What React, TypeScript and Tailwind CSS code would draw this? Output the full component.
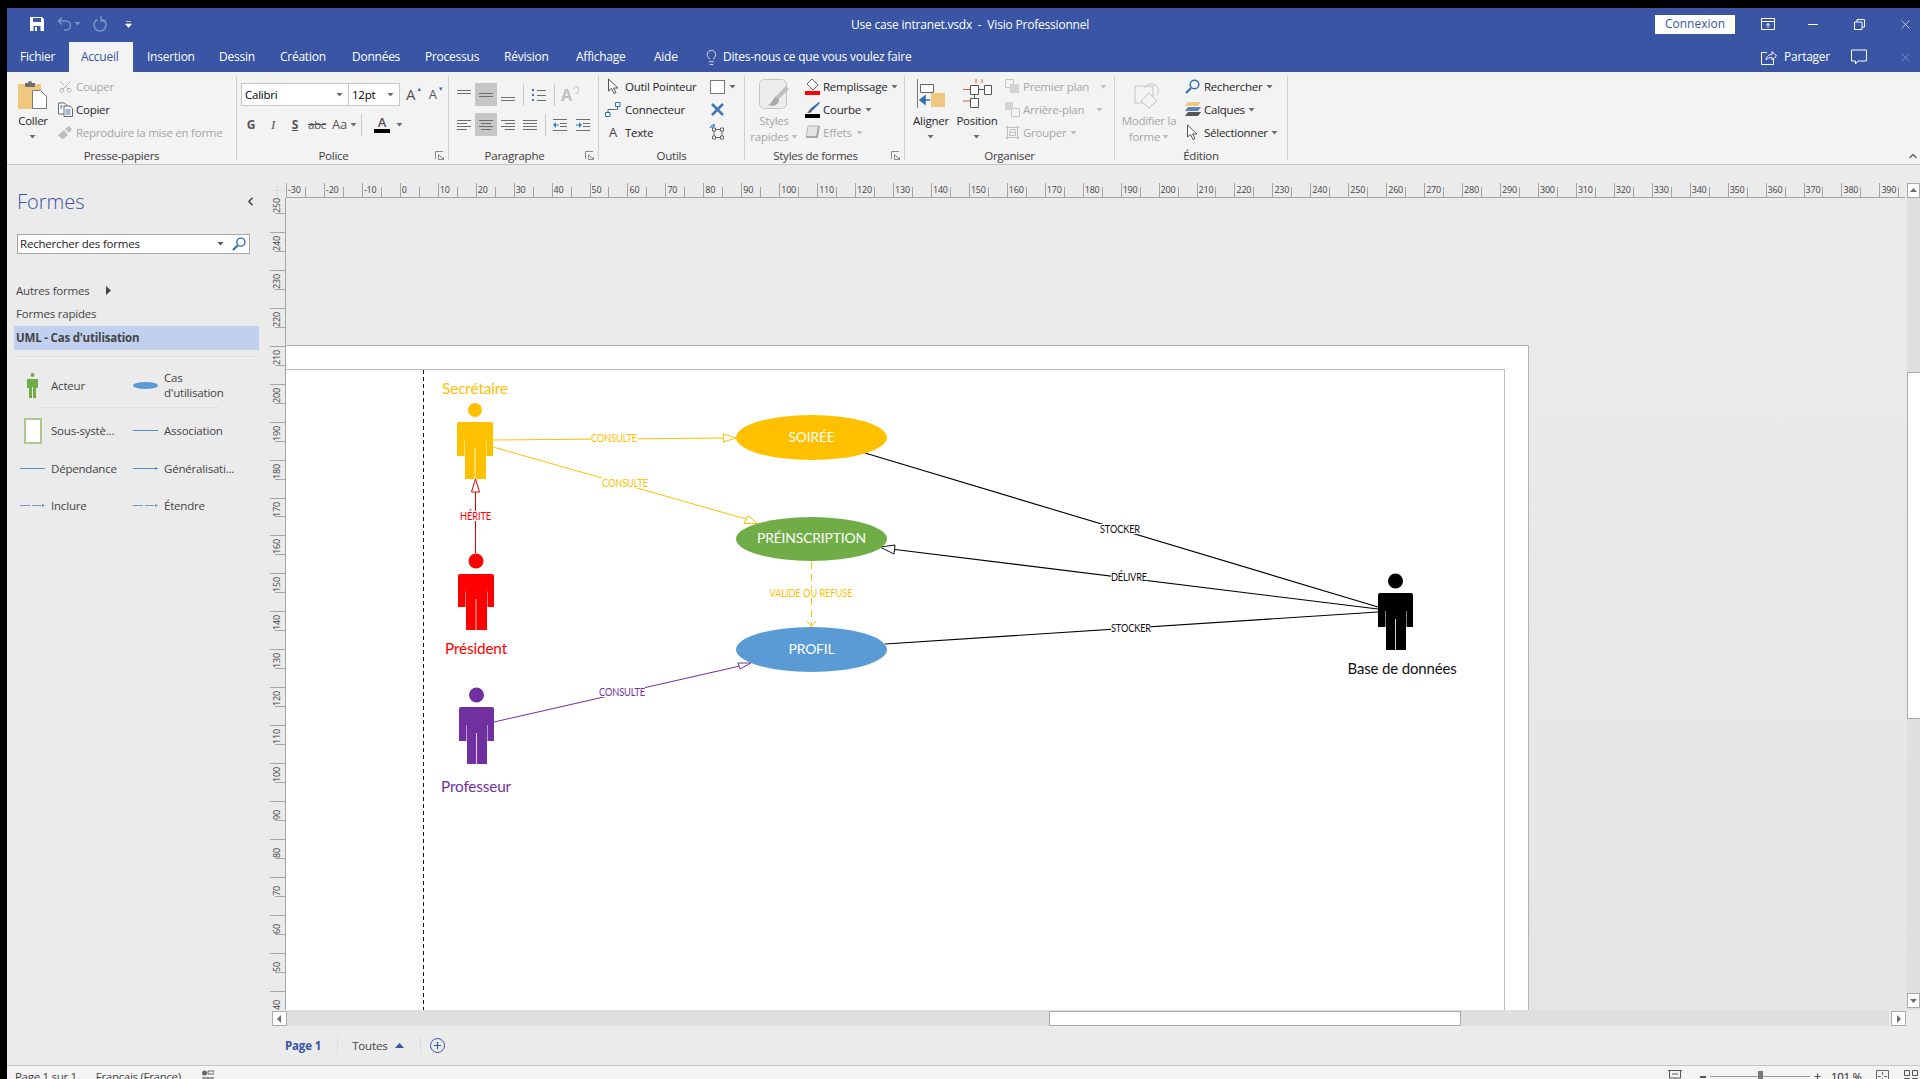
import type { ReactNode } from "react"
import { ChevronLeft, ChevronUp, Lightbulb, Plus, Scissors, X } from "lucide-react"

const GRAY = "#a6a6a6"
const TOP_TICKS = Array.from({ length: 43 }, (_, i) => -30 + i * 10)
const LEFT_TICKS = Array.from({ length: 22 }, (_, i) => 250 - i * 10)

function Caret({ color = "#6a6a6a" }: { color?: string }) {
  return (
    <svg width="7" height="4" viewBox="0 0 7 4" className="shrink-0">
      <path d="M0.5 0h6L3.5 3.5z" fill={color} />
    </svg>
  )
}

function Lines({ rows, color = "#6e6e6e" }: { rows: number[][]; color?: string }) {
  return (
    <svg width="16" height="16" viewBox="0 0 16 16">
      {rows.map(([a, b, y], i) => (
        <line key={i} x1={a} x2={b} y1={y + 0.5} y2={y + 0.5} stroke={color} />
      ))}
    </svg>
  )
}

function PointerIcon() {
  return (
    <svg width="13" height="17" viewBox="0 0 13 17">
      <path d="M1.5 1v12l3-2.5 2.500 5 2-1-2.500-4.500h4.500z" fill="#fff" stroke="#555" />
    </svg>
  )
}

function MagIcon({ size = 15 }: { size?: number }) {
  return (
    <svg width={size} height={size} viewBox="0 0 15 15">
      <circle cx="9.500" cy="5.500" r="4.300" fill="none" stroke="#2f6fb4" strokeWidth="1.500" />
      <path d="M6 9l-5 5" stroke="#2f6fb4" strokeWidth="2.200" />
    </svg>
  )
}

function Sep({ h = "h-[22px]" }: { h?: string }) {
  return <div className={`${h} w-px shrink-0 bg-[#c8c8c8]`} />
}

function Slot({ w = "w-[22px]", on, children }: { w?: string; on?: boolean; children: ReactNode }) {
  return (
    <div className={`flex h-[23px] shrink-0 items-center justify-center ${w} ${on ? "bg-[#c6c6c6]" : ""}`}>
      {children}
    </div>
  )
}

function Row({ icon, label, muted, caret, gap = "gap-[2px]", caretGap }: { icon?: ReactNode; label: string; muted?: boolean; caret?: boolean; gap?: string; caretGap?: string }) {
  return (
    <div className={`flex h-[23px] items-center whitespace-nowrap ${gap} ${muted ? "text-[#a6a6a6]" : "text-[#262626]"}`}>
      <span className="flex w-[18px] shrink-0 items-center justify-center">{icon}</span>
      <span>{label}</span>
      {caret && (
        <span className={caretGap ?? "ml-[2px]"}>
          <Caret color={muted ? "#bdbdbd" : "#6a6a6a"} />
        </span>
      )}
    </div>
  )
}

function BigButton({ w, ml, icon, lines, caret, muted }: { w: string; ml?: string; icon: ReactNode; lines: string[]; caret?: "below" | "inline"; muted?: boolean }) {
  return (
    <div className={`flex shrink-0 flex-col items-center pt-[7px] ${w} ${ml ?? ""} ${muted ? "text-[#a6a6a6]" : "text-[#262626]"}`}>
      <div className="flex h-[34px] items-start justify-center">{icon}</div>
      <div className="flex flex-col items-center leading-[16px] whitespace-nowrap">
        {lines.map((l, i) => (
          <span key={l} className="flex items-center gap-[2px]">
            {l}
            {caret === "inline" && i === lines.length - 1 && <Caret color="#bdbdbd" />}
          </span>
        ))}
        {caret === "below" && (
          <span className="flex h-[16px] items-center">
            <Caret />
          </span>
        )}
      </div>
    </div>
  )
}

function Launcher() {
  return (
    <svg width="9" height="9" viewBox="0 0 9 9" className="mx-auto">
      <path d="M.5 8V.5H8M8.500 8.500H3.500V3.500M4 4l4 4M8.500 6v2.500H6" fill="none" stroke="#8a8a8a" />
    </svg>
  )
}

function Group({ w, label, launcher, children }: { w: string; label: string; launcher?: boolean; children: ReactNode }) {
  return (
    <div className={`flex h-full shrink-0 ${w}`}>
      <div className="flex min-w-0 flex-1 flex-col">
        <div className="flex min-h-0 flex-1">{children}</div>
        <div className="mb-[1px] flex h-[15px] items-center leading-[15px] text-[#404040]">
          <span className="flex-1 text-center whitespace-nowrap">{label}</span>
          {launcher && (
            <span className="w-[18px]">
              <Launcher />
            </span>
          )}
        </div>
      </div>
      <div className="mt-1 mb-[4px] w-px bg-[#d0d0d0]" />
    </div>
  )
}

function TitleBar() {
  return (
    <div className="relative flex h-[34px] shrink-0 items-center pb-[2px] text-[12px] text-white">
      <div className="ml-[22px] flex w-[130px] items-center">
        <svg width="16" height="16" viewBox="0 0 16 16">
          <path d="M1 1h12l2 2v12H1z" fill="#fff" />
          <path d="M4 2h8v4H4z" fill="#3955a3" />
          <path d="M4.500 10h7v5h-7z" fill="#3955a3" />
          <path d="M6 11h2v4H6z" fill="#fff" />
        </svg>
        <svg width="16" height="16" viewBox="0 0 16 16" className="ml-[12px]">
          <path d="M5 1.500 1.500 5 5 8.500M1.500 5H9a4 4 0 0 1 0 9H7" fill="none" stroke="#7e93c8" strokeWidth="1.500" />
        </svg>
        <span className="ml-[1px]">
          <Caret color="#7e93c8" />
        </span>
        <svg width="16" height="16" viewBox="0 0 16 16" className="ml-[11px]">
          <path d="M10.500 3.500a6 6 0 1 1-5 0M9 0v5h5" fill="none" stroke="#7e93c8" strokeWidth="1.500" />
        </svg>
        <svg width="7" height="7" viewBox="0 0 7 7" className="ml-[17px]">
          <path d="M1 .5h5M.5 3h6L3.500 6.500z" fill="#fff" stroke="#fff" strokeWidth=".6" />
        </svg>
      </div>
      <div className="absolute top-[8px] left-[844px] tracking-[-0.2px] whitespace-pre">Use case intranet.vsdx  -  Visio Professionnel</div>
      <div className="ml-auto flex items-center">
        <div className="flex h-[19px] w-[80px] items-center justify-center bg-white text-[#3955a3]">Connexion</div>
        <svg width="14" height="12" viewBox="0 0 14 12" className="ml-[26px]">
          <path d="M.5.500h13v11H.5zM.5 3.500h13M7 10V5.500M5 7.500l2-2 2 2" fill="none" stroke="#fff" />
        </svg>
        <div className="ml-[33px] h-px w-[10px] bg-white" />
        <svg width="11" height="11" viewBox="0 0 11 11" className="ml-[36px]">
          <path d="M.5 3h7.500v7.500H.5zM3 3V.5h7.500V8H8" fill="none" stroke="#fff" />
        </svg>
        <X size={15} strokeWidth={1} className="mr-[7px] ml-[33px]" />
      </div>
    </div>
  )
}

const TABS = [
  { label: "Fichier", w: "w-[62px]", pl: "pl-[13px]" },
  { label: "Accueil", w: "w-[64px]", pl: "pl-[12px]", active: true },
  { label: "Insertion", w: "w-[73px]", pl: "pl-[14px]" },
  { label: "Dessin", w: "w-[61px]", pl: "pl-[13px]" },
  { label: "Création", w: "w-[72px]", pl: "pl-[13px]" },
  { label: "Données", w: "w-[73px]", pl: "pl-[13px]" },
  { label: "Processus", w: "w-[79px]", pl: "pl-[13px]" },
  { label: "Révision", w: "w-[71px]", pl: "pl-[13px]" },
  { label: "Affichage", w: "w-[78px]", pl: "pl-[14px]" },
  { label: "Aide", w: "w-[57px]", pl: "pl-[14px]" },
]

function TabBar() {
  return (
    <div className="flex h-[30px] shrink-0 items-stretch text-[12px] tracking-[-0.25px] text-white">
      {TABS.map((t) => (
        <div key={t.label} className={`flex items-center ${t.w} ${t.pl} ${t.active ? "bg-[#f3f3f3] text-[#3955a3]" : ""}`}>
          {t.label}
        </div>
      ))}
      <div className="ml-[6px] flex items-center gap-[3px]">
        <Lightbulb size={17} strokeWidth={1.1} />
        <span>Dites-nous ce que vous voulez faire</span>
      </div>
      <div className="ml-auto flex items-center">
        <svg width="16" height="15" viewBox="0 0 16 15">
          <path d="M6 2.500H.5v12h12V9M5 10c.5-4 3-5.500 6-5.500V1.500l4.500 4.500L11 10V7.500C8.500 7.500 6.500 8 5 10z" fill="none" stroke="#fff" />
        </svg>
        <span className="ml-[7px]">Partager</span>
        <svg width="16" height="16" viewBox="0 0 16 16" className="ml-[21px]">
          <path d="M.5 1h15v11H7l-2.500 3v-3h-4z" fill="none" stroke="#fff" />
        </svg>
        <X size={15} strokeWidth={1} className="mr-[7px] ml-[31px] opacity-50" />
      </div>
    </div>
  )
}

function Ribbon() {
  return (
    <div className="relative flex h-[93px] shrink-0 border-b border-[#c6c6c6] bg-[#f3f3f3] text-[11.5px] tracking-[-0.25px]">
      <Group w="w-[230px]" label="Presse-papiers">
        <BigButton
          w="w-[38px]"
          ml="ml-[7px]"
          lines={["Coller"]}
          caret="below"
          icon={
            <svg width="30" height="30" viewBox="0 0 30 30">
              <path d="M0 5h23v25H0z" fill="#edc87e" />
              <path d="M7 4h3a2 2 0 0 1 4 0h3v4H7z" fill="#6f6f6f" />
              <path d="M14.500 11.500h8l6 6v12h-14z" fill="#fff" stroke="#7a7a7a" />
            </svg>
          }
        />
        <div className="ml-[4px] pt-[3px]">
          <Row muted label="Couper" icon={<Scissors size={15} strokeWidth={1.2} color={GRAY} className="-scale-x-100 rotate-90" />} />
          <Row
            label="Copier"
            icon={
              <svg width="15" height="15" viewBox="0 0 15 15">
                <path d="M.5 1h6l2 2v9H.5z" fill="#fff" stroke="#666" />
                <path d="M6 4h6l2.500 2.500V14.500H6z" fill="#fff" stroke="#666" />
                <path d="M7.500 8h5M7.500 10h5M7.500 12h5M2 4h3M2 6h2" stroke="#3d6fb4" />
              </svg>
            }
          />
          <Row
            muted
            label="Reproduire la mise en forme"
            icon={
              <svg width="15" height="15" viewBox="0 0 15 15">
                <path d="M0 10l6-5 4 5-5 4-2-1zM7 4l4-3 3 3-3 4z" fill="#bdbdbd" />
              </svg>
            }
          />
        </div>
      </Group>

      <Group w="w-[212px]" label="Police" launcher>
        <div className="flex flex-col pt-[11px] pl-[4px]">
          <div className="flex items-center">
            <div className="flex h-[23px] w-[107px] items-center justify-between border border-r-0 border-[#c6c6c6] bg-white pr-[5px] pl-[3px]">
              <span>Calibri</span>
              <Caret />
            </div>
            <div className="flex h-[23px] w-[52px] items-center justify-between border border-[#c6c6c6] bg-white pr-[5px] pl-[3px]">
              <span>12pt</span>
              <Caret />
            </div>
            <div className="ml-[2px] flex w-[24px] items-center justify-center text-[15px] text-[#555]">
              A<span className="-mt-[10px] ml-[1px] text-[6px] text-[#3d6fb4]">▲</span>
            </div>
            <div className="flex w-[20px] items-center justify-center text-[13px] text-[#555]">
              A<span className="-mt-[10px] ml-[1px] text-[6px] text-[#3d6fb4]">▼</span>
            </div>
          </div>
          <div className="mt-[7px] -ml-[1px] flex items-center text-[#555]">
            <Slot><span className="text-[12px] font-bold">G</span></Slot>
            <Slot><span className="font-['Liberation_Serif'] text-[13px] italic">I</span></Slot>
            <Slot><span className="text-[12px] font-bold underline">S</span></Slot>
            <Slot><span className="line-through">abc</span></Slot>
            <div className="flex w-[33px] items-center gap-[3px] pl-[4px] text-[13px]">
              Aa <Caret />
            </div>
            <Sep />
            <div className="ml-[9px] flex w-[22px] flex-col items-center text-[13px] leading-[13px] font-semibold">
              A
              <div className="h-[4px] w-[16px] bg-black" />
            </div>
            <span className="ml-[3px]"><Caret /></span>
          </div>
        </div>
      </Group>

      <Group w="w-[150px]" label="Paragraphe" launcher>
        <div className="flex flex-col pt-[11px] pl-[4px]">
          <div className="flex items-center">
            <Slot><Lines rows={[[1, 15, 3], [1, 15, 6]]} /></Slot>
            <Slot on><Lines rows={[[1, 15, 6], [1, 15, 9]]} /></Slot>
            <Slot><Lines rows={[[1, 15, 10], [1, 15, 13]]} /></Slot>
            <span className="ml-[4px]"><Sep /></span>
            <Slot w="w-[30px]">
              <svg width="16" height="16" viewBox="0 0 16 16">
                <path d="M1 2h2v2H1zM1 7h2v2H1zM1 12h2v2H1z" fill="#3d6fb4" />
                <path d="M6 3.500h9M6 8.500h9M6 13.500h9" stroke="#6e6e6e" />
              </svg>
            </Slot>
            <Sep />
            <Slot w="w-[30px]">
              <div className="flex items-start text-[16px] leading-[20px] font-bold text-[#c0c0c0]">
                A
                <svg width="7" height="9" viewBox="0 0 7 9" className="mt-[1px]">
                  <path d="M1 3l2.500-2.500M3.500.5a3.500 3.500 0 0 1 0 7" fill="none" stroke="#bdbdbd" />
                </svg>
              </div>
            </Slot>
          </div>
          <div className="mt-[7px] flex items-center">
            <Slot><Lines rows={[[1, 15, 3], [1, 11, 6], [1, 15, 9], [1, 11, 12]]} /></Slot>
            <Slot on><Lines rows={[[1, 15, 3], [3, 13, 6], [1, 15, 9], [3, 13, 12]]} /></Slot>
            <Slot><Lines rows={[[1, 15, 3], [5, 15, 6], [1, 15, 9], [5, 15, 12]]} /></Slot>
            <Slot><Lines rows={[[1, 15, 3], [1, 15, 6], [1, 15, 9], [1, 15, 12]]} /></Slot>
            <span className="ml-[4px]"><Sep /></span>
            <Slot w="w-[28px]">
              <svg width="16" height="16" viewBox="0 0 16 16">
                <path d="M1 2.500h14M8 6.500h7M8 9.500h7M1 13.500h14" stroke="#6e6e6e" />
                <path d="M1 8l3-3v6z" fill="#2f7fc1" />
                <path d="M4 8h3" stroke="#2f7fc1" />
              </svg>
            </Slot>
            <Slot w="w-[18px]">
              <svg width="16" height="16" viewBox="0 0 16 16">
                <path d="M1 2.500h14M8 6.500h7M8 9.500h7M1 13.500h14" stroke="#6e6e6e" />
                <path d="M7 8L4 5v6z" fill="#2f7fc1" />
                <path d="M1 8h3" stroke="#2f7fc1" />
              </svg>
            </Slot>
          </div>
        </div>
      </Group>

      <Group w="w-[146px]" label="Outils">
        <div className="w-[108px] pt-[3px] pl-[5px]">
          <Row gap="gap-[3px]" label="Outil Pointeur" icon={<PointerIcon />} />
          <Row
            gap="gap-[3px]"
            label="Connecteur"
            icon={
              <svg width="16" height="15" viewBox="0 0 16 15">
                <path d="M3 10V7.500h9.500V4" fill="none" stroke="#666" />
                <path d="M.5 10.500h4.500v4H.5zM10.500.5h4.500v4h-4.500z" fill="#fff" stroke="#2f6fb4" />
              </svg>
            }
          />
          <Row gap="gap-[3px]" label="Texte" icon={<span className="text-[13px] text-[#444]">A</span>} />
        </div>
        <div className="flex flex-col pt-[3px]">
          <div className="flex h-[23px] items-center gap-[4px] pl-[3px]">
            <div className="h-[14px] w-[15px] border border-[#777] bg-white" />
            <Caret />
          </div>
          <div className="flex h-[23px] items-center pl-[3px]">
            <svg width="15" height="15" viewBox="0 0 15 15">
              <path d="M2 2l11 11M13 2 2 13" stroke="#3f78b8" strokeWidth="2.500" />
            </svg>
          </div>
          <div className="flex h-[23px] items-center pl-[2px]">
            <svg width="17" height="17" viewBox="0 0 17 17">
              <path d="M5 5.500h8v8H5z" fill="none" stroke="#666" />
              <path d="M3.500 4h3v3h-3zM11.500 4h3v3h-3zM3.500 12h3v3h-3zM11.500 12h3v3h-3z" fill="#fff" stroke="#666" />
              <path d="M1 4a4 4 0 0 1 5-3M5 0v3H2" fill="none" stroke="#2f6fb4" />
            </svg>
          </div>
        </div>
      </Group>

      <Group w="w-[160px]" label="Styles de formes" launcher>
        <BigButton
          w="w-[50px]"
          ml="ml-[4px]"
          muted
          lines={["Styles", "rapides"]}
          caret="inline"
          icon={
            <svg width="30" height="30" viewBox="0 0 30 30">
              <rect x=".5" y=".5" width="27" height="29" rx="5" fill="#ececec" stroke="#c4c4c4" />
              <path d="M30 10 19 21l-3-3L27 7z" fill="#bfbfbf" />
              <path d="M17 18c-4 1-3 6-8 8 5 2 11 0 11-5z" fill="#a9a9a9" />
            </svg>
          }
        />
        <div className="ml-[4px] pt-[3px]">
          <Row
            label="Remplissage"
            caret
            icon={
              <svg width="17" height="17" viewBox="0 0 17 17">
                <path d="M8 1l6 6-5 5-6-6z" fill="#fff" stroke="#666" />
                <path d="M1 13h15v4H1z" fill="#ff0000" />
              </svg>
            }
          />
          <Row
            label="Courbe"
            caret
            icon={
              <svg width="17" height="17" viewBox="0 0 17 17">
                <path d="M15 1l1 1-8 8-2-2z" fill="#2f6fb4" />
                <path d="M6 8l2 2c-1 2-4 2-5 2 1-1 2-2 3-4z" fill="#555" />
                <path d="M1 13h15v4H1z" fill="#000" />
              </svg>
            }
          />
          <Row
            muted
            caret
            label="Effets"
            icon={
              <svg width="15" height="15" viewBox="0 0 15 15">
                <path d="M3 1h11l-2 11H1z" fill="#e4e4e4" stroke="#b5b5b5" />
                <path d="M1 12h11l2-11" fill="none" stroke="#a8a8a8" strokeWidth="2" />
              </svg>
            }
          />
        </div>
      </Group>

      <Group w="w-[210px]" label="Organiser">
        <BigButton
          w="w-[48px]"
          ml="ml-[2px]"
          lines={["Aligner"]}
          caret="below"
          icon={
            <svg width="28" height="30" viewBox="0 0 28 30">
              <path d="M.5 0v29" stroke="#777" />
              <path d="M3.500 5.500h13v8h-13z" fill="#fff" stroke="#666" />
              <path d="M14 14h14v14H14z" fill="#edc87e" />
              <path d="M3 21l5-4v8zM7 21h6" fill="#2f6fb4" stroke="#2f6fb4" strokeWidth="1.500" />
            </svg>
          }
        />
        <BigButton
          w="w-[44px]"
          lines={["Position"]}
          caret="below"
          icon={
            <svg width="30" height="30" viewBox="0 0 30 30">
              <path d="M14 0v4M20 0v4M1 10.500h7M1 22h7" stroke="#d5603f" />
              <path d="M8.500 6.500h8v9h-8zM22.500 6.500h7v9h-7zM8.500 19.500h8v9h-8z" fill="#fff" stroke="#555" />
              <path d="M16.500 10.500h6M12.500 15.500v4" stroke="#555" />
            </svg>
          }
        />
        <div className="ml-[4px] pt-[3px]">
          <Row
            muted
            label="Premier plan"
            caret
            caretGap="ml-[9px]"
            icon={
              <svg width="15" height="15" viewBox="0 0 15 15">
                <path d="M.5.5h8v8h-8z" fill="none" stroke="#c4c4c4" />
                <path d="M5 5h9v9H5z" fill="#d4d4d4" />
              </svg>
            }
          />
          <Row
            muted
            label="Arrière-plan"
            caret
            caretGap="ml-[10px]"
            icon={
              <svg width="15" height="15" viewBox="0 0 15 15">
                <path d="M0 0h8v8H0z" fill="#d4d4d4" />
                <path d="M6.500 6.500h8v8h-8z" fill="#f3f3f3" stroke="#c4c4c4" />
              </svg>
            }
          />
          <Row
            muted
            label="Grouper"
            caret
            icon={
              <svg width="15" height="15" viewBox="0 0 15 15">
                <path d="M.5 2.500h14M.5 12.500h14M2.500.5v14M12.500.5v14M5 4.500h5v3h-5zM4.500 7.500h6v3h-6z" fill="none" stroke="#c0c0c0" />
              </svg>
            }
          />
        </div>
      </Group>

      <Group w="w-[173px]" label="Édition">
        <BigButton
          w="w-[56px]"
          ml="ml-[6px]"
          muted
          lines={["Modifier la", "forme"]}
          caret="inline"
          icon={
            <svg width="30" height="30" viewBox="0 0 30 30">
              <path d="M1 7h18v17H1z" fill="none" stroke="#c4c4c4" />
              <path d="M11 9a7 7 0 1 1 12 7" fill="none" stroke="#c4c4c4" />
              <path d="M15 14l8 8-8 7-8-7z" fill="#f3f3f3" stroke="#c4c4c4" />
            </svg>
          }
        />
        <div className="ml-[6px] pt-[3px]">
          <Row gap="gap-[3px]" label="Rechercher" caret caretGap="ml-0" icon={<MagIcon />} />
          <Row
            gap="gap-[3px]"
            label="Calques"
            caret
            caretGap="ml-0"
            icon={
              <svg width="17" height="15" viewBox="0 0 17 15">
                <path d="M4 0h13l-3 4H1z" fill="#edc87e" />
                <path d="M4 5h13l-3 4H1z" fill="#5b83b5" />
                <path d="M4 10h13l-3 4H1z" fill="#555" />
              </svg>
            }
          />
          <Row gap="gap-[3px]" label="Sélectionner" caret caretGap="ml-0" icon={<PointerIcon />} />
        </div>
      </Group>

      <ChevronUp size={12} strokeWidth={2.5} color="#555" className="absolute right-[1px] bottom-[2px]" />
    </div>
  )
}

function Stencil({ icon, label }: { icon: ReactNode; label: ReactNode }) {
  return (
    <div className="flex items-center">
      <div className="flex w-[37px] shrink-0 items-center justify-center">{icon}</div>
      <div className="leading-[15px]">{label}</div>
    </div>
  )
}

function LineIcon({ kind }: { kind?: "arrow" | "dash" }) {
  return (
    <svg width="26" height="5" viewBox="0 0 26 5">
      {kind === "dash" ? <path d="M0 2.500h10M12 2.500h9" stroke="#6d9bd0" /> : <path d="M0 2.500h25" stroke="#5b8fc9" />}
      {kind && <path d="M22 1l3 1.500L22 4z" fill="#5b8fc9" />}
    </svg>
  )
}

function Sidebar() {
  return (
    <div className="flex w-[263px] shrink-0 flex-col bg-[#ebebeb] text-[11.5px] tracking-[-0.2px] text-[#444]">
      <div className="flex h-[52px] items-end justify-between pr-[13px] pl-[10px]">
        <span className="text-[20px] leading-[30px] font-light tracking-normal text-[#3955a3]">Formes</span>
        <ChevronLeft size={13} strokeWidth={3} color="#444" className="mb-[9px]" />
      </div>
      <div className="mt-[17px] ml-[10px] flex h-[20px] w-[233px] items-center border border-[#a6a6a6] bg-white pr-[3px] pl-[2px] text-[#222]">
        <span className="flex-1">Rechercher des formes</span>
        <Caret color="#555" />
        <span className="ml-[8px]"><MagIcon size={14} /></span>
      </div>
      <div className="mt-[25px] flex h-[23px] items-center pl-[9px]">
        Autres formes
        <svg width="5" height="9" viewBox="0 0 5 9" className="ml-[16px]">
          <path d="M0 0l5 4.500L0 9z" fill="#444" />
        </svg>
      </div>
      <div className="flex h-[23px] items-center pl-[9px]">Formes rapides</div>
      <div className="mt-[1px] ml-[7px] flex h-[24px] w-[245px] items-center bg-[#c2d0f0] pl-[2px] font-bold">UML - Cas d'utilisation</div>
      <div className="mt-[6px] ml-[7px] h-px w-[245px] bg-[#dedede]" />
      <div className="ml-[7px] grid h-[50px] w-[226px] grid-cols-2 items-center pt-[6px]">
        <Stencil
          label="Acteur"
          icon={
            <svg width="11" height="25" viewBox="0 0 11 25">
              <circle cx="5.500" cy="2" r="2" fill="#70ad47" />
              <path d="M0 6h11v9H9v10H2V15H0z" fill="#70ad47" />
              <path d="M5.500 14v11" stroke="#ebebeb" />
            </svg>
          }
        />
        <Stencil
          label={
            <>
              Cas
              <br />
              d'utilisation
            </>
          }
          icon={<div className="h-[7px] w-[25px] rounded-[50%] bg-[#5b9bd5]" />}
        />
      </div>
      <div className="ml-[33px] h-px w-[179px] bg-[#dedede]" />
      <div className="mt-[4px] ml-[7px] grid w-[226px] grid-cols-2 items-center [grid-auto-rows:37.5px]">
        <Stencil label="Sous-systè..." icon={<div className="h-[26px] w-[18px] border-2 border-[#a9c98f] bg-white" />} />
        <Stencil label="Association" icon={<LineIcon />} />
        <Stencil label="Dépendance" icon={<LineIcon />} />
        <Stencil label="Généralisati..." icon={<LineIcon kind="arrow" />} />
        <Stencil label="Inclure" icon={<LineIcon kind="dash" />} />
        <Stencil label="Étendre" icon={<LineIcon kind="dash" />} />
      </div>
    </div>
  )
}

function TopRuler() {
  return (
    <div className="flex h-[15px] overflow-hidden border-b border-[#a6a6a6]">
      {TOP_TICKS.map((v) => (
        <div key={v} className="flex w-[37.95px] shrink-0 items-end">
          <div className="h-full w-1/2 border-l border-[#a6a6a6] pl-[1px] text-[9px] leading-[13px] tracking-[-0.2px] whitespace-nowrap text-[#444]">{v}</div>
          <div className="h-[10px] w-1/2 border-l border-[#a6a6a6]" />
        </div>
      ))}
    </div>
  )
}

function LeftRuler() {
  return (
    <div className="h-full w-[16px] shrink-0 overflow-hidden border-r border-[#a6a6a6] bg-[#ebebeb]">
      <div className="-mt-[4px] flex flex-col">
        {LEFT_TICKS.map((v) => (
          <div key={v} className="flex h-[37.95px] shrink-0 flex-col items-end">
            <div className="flex h-1/2 w-full border-t border-[#a6a6a6] pl-[1px] text-[9px] tracking-[-0.2px] text-[#444]">
              <span className="rotate-180 leading-[11px] [writing-mode:vertical-rl]">{v}</span>
            </div>
            <div className="h-1/2 w-[10px] border-t border-[#a6a6a6]" />
          </div>
        ))}
      </div>
    </div>
  )
}

function Actor({ x, top, headR, bodyTop, armEnd, legEnd, w, color }: { x: number; top: number; headR: number; bodyTop: number; armEnd: number; legEnd: number; w: number; color: string }) {
  const cx = x + w / 2
  const slit = bodyTop + (armEnd - bodyTop) * 0.53
  return (
    <g>
      <circle cx={cx} cy={top + headR} r={headR} fill={color} />
      <path
        d={`M${x + 2} ${bodyTop}h${w - 4}q2 0 2 2V${armEnd}h-6.5V${slit}h-.5V${legEnd}h-${w - 15}V${slit}h-.5V${armEnd}H${x}V${bodyTop + 2}q0-2 2-2z`}
        fill={color}
      />
      <line x1={cx} x2={cx} y1={armEnd - 8} y2={legEnd} stroke="#fff" strokeWidth=".8" />
    </g>
  )
}

function EdgeLabel({ x, y, w, color, children }: { x: number; y: number; w: number; color: string; children: string }) {
  return (
    <g>
      <rect x={x - w / 2} y={y - 5} width={w} height={10} fill="#fff" />
      <text x={x - w / 2} y={y + 3.5} fontSize="10.5" fill={color} textLength={w} lengthAdjust="spacingAndGlyphs" fontFamily="Lato">
        {children}
      </text>
    </g>
  )
}

function UseCase({ cy, ry, fill, w, children }: { cy: number; ry: number; fill: string; w: number; children: string }) {
  return (
    <g>
      <ellipse cx="811.5" cy={cy} rx="75.5" ry={ry} fill={fill} />
      <text x={811.5 - w / 2} y={cy + 4} fontSize="14" fill="#fff" textLength={w} lengthAdjust="spacingAndGlyphs" fontFamily="Lato">
        {children}
      </text>
    </g>
  )
}

function Title({ x, y, w, color, children }: { x: number; y: number; w: number; color: string; children: string }) {
  return (
    <text x={x - w / 2} y={y} fontSize="15" fill={color} textLength={w} lengthAdjust="spacingAndGlyphs" fontFamily="Lato">
      {children}
    </text>
  )
}

function Diagram() {
  return (
    <svg width="1621" height="812" viewBox="286 198 1621 812" className="absolute top-0 left-0">
      <line x1="423.5" x2="423.5" y1="370" y2="1010" stroke="#111" strokeDasharray="4 3" />

      <Title x={475} y={394} w={66} color="#ffc000">Secrétaire</Title>
      <Title x={476} y={654} w={62} color="#ff0000">Président</Title>
      <Title x={476} y={792} w={70} color="#7030a0">Professeur</Title>
      <Title x={1402} y={674} w={109} color="#111">Base de données</Title>

      <g fill="none" strokeWidth="1">
        <line x1="865" y1="453" x2="1378" y2="607" stroke="#000" strokeWidth="1.1" />
        <line x1="1378" y1="609" x2="895" y2="549.5" stroke="#000" strokeWidth="1.1" />
        <line x1="885" y1="644" x2="1378" y2="612" stroke="#000" strokeWidth="1.1" />
        <path d="M880 547l15-2-1 9z" fill="#fff" stroke="#111" />
        <line x1="493" y1="440" x2="724" y2="438" stroke="#ffc000" />
        <path d="M736 438l-12.5-4v8z" fill="#fff" stroke="#ffc000" />
        <line x1="493" y1="447" x2="746" y2="519" stroke="#ffc000" />
        <path d="M757.5 523.5l-13.5 0 4-8z" fill="#fff" stroke="#ffc000" />
        <line x1="475.5" y1="553" x2="475.5" y2="492" stroke="#e00000" />
        <path d="M475.5 479l-4 13h8z" fill="#fff" stroke="#e00000" />
        <line x1="494" y1="722" x2="740" y2="666" stroke="#7030a0" />
        <path d="M751 663l-13 0 2 6z" fill="#fff" stroke="#7030a0" />
      </g>

      <UseCase cy={437.5} ry={22.5} fill="#ffc000" w={46}>SOIRÉE</UseCase>
      <UseCase cy={539} ry={22} fill="#70ad47" w={109}>PRÉINSCRIPTION</UseCase>
      <UseCase cy={649.5} ry={22.5} fill="#5b9bd5" w={46}>PROFIL</UseCase>

      <line x1="811.5" y1="562" x2="811.5" y2="626" stroke="#ffc000" strokeDasharray="7 5" />
      <path d="M807 621l4.5 5.5 4.5-5.5" fill="none" stroke="#ffc000" />

      <Actor x={457} top={403} headR={7} bodyTop={422} armEnd={456} legEnd={479} w={36} color="#ffc000" />
      <Actor x={458} top={553.5} headR={7.5} bodyTop={574} armEnd={607} legEnd={630} w={36} color="#ff0000" />
      <Actor x={459} top={687.5} headR={7.5} bodyTop={707} armEnd={741} legEnd={764} w={35} color="#7030a0" />
      <Actor x={1378} top={573.5} headR={7.5} bodyTop={593} armEnd={627} legEnd={650} w={35} color="#000" />

      <EdgeLabel x={614} y={438} w={46} color="#ffc000">CONSULTE</EdgeLabel>
      <EdgeLabel x={625} y={483} w={46} color="#ffc000">CONSULTE</EdgeLabel>
      <EdgeLabel x={475.5} y={516} w={31} color="#ff0000">HÉRITE</EdgeLabel>
      <EdgeLabel x={811} y={593} w={83} color="#ffc000">VALIDE OU REFUSE</EdgeLabel>
      <EdgeLabel x={622} y={692} w={46} color="#7030a0">CONSULTE</EdgeLabel>
      <EdgeLabel x={1120} y={529} w={40} color="#111">STOCKER</EdgeLabel>
      <EdgeLabel x={1129} y={577} w={36} color="#111">DÉLIVRE</EdgeLabel>
      <EdgeLabel x={1131} y={628} w={40} color="#111">STOCKER</EdgeLabel>
    </svg>
  )
}

function ScrollButton({ dir }: { dir: "up" | "down" | "left" | "right" }) {
  const d = { up: "M1 6h7L4.500 2z", down: "M1 3h7L4.500 7z", left: "M6 1v8L2 5z", right: "M3 1v8l4-4z" }[dir]
  return (
    <div className="flex h-[15px] shrink-0 items-center justify-center border border-[#ababab] bg-white">
      <svg width="9" height="10" viewBox="0 0 9 10">
        <path d={d} fill="#6e6e6e" />
      </svg>
    </div>
  )
}

function Workspace() {
  return (
    <div className="flex min-w-0 flex-1 flex-col bg-[#ebebeb] text-[11.5px] tracking-[-0.15px]">
      <div className="mt-[18px] flex h-[15px] shrink-0">
        <div className="relative w-[16px] shrink-0">
          <div className="absolute top-[7px] left-[1px] h-px w-[14px] bg-[#dcdcdc]" />
          <div className="absolute top-0 left-[7px] h-[15px] w-px bg-[#dcdcdc]" />
        </div>
        <div className="w-[1619px] shrink-0">
          <TopRuler />
        </div>
        <div className="ml-[2px] w-[13px]">
          <ScrollButton dir="up" />
        </div>
      </div>

      <div className="flex h-[812px] shrink-0">
        <LeftRuler />
        <div className="relative w-[1621px] shrink-0 overflow-hidden bg-gradient-to-b from-[#ebebeb] to-[#e5e5e5]">
          <div className="absolute top-[147px] bottom-0 left-0 w-[1243px] border-t border-r border-[#b0b4ba] bg-white" />
          <div className="absolute top-[171px] bottom-0 left-0 w-[1219px] border-t border-r border-[#bdbdbd]" />
          <Diagram />
        </div>
        <div className="flex w-[13px] shrink-0 flex-col bg-[#dfdfdf]">
          <div className="h-[174px]" />
          <div className="h-[347px] border border-r-0 border-[#ababab] bg-white" />
          <div className="flex-1" />
          <ScrollButton dir="down" />
          <div className="h-[2px]" />
        </div>
      </div>

      <div className="flex h-[16px] shrink-0 items-end pl-[2px]">
        <div className="w-[15px]"><ScrollButton dir="left" /></div>
        <div className="flex h-[16px] w-[1602px] items-end bg-[#dfdfdf]">
          <div className="ml-[762px] h-[15px] w-[412px] border border-[#ababab] bg-white" />
        </div>
        <div className="ml-[2px] w-[15px]"><ScrollButton dir="right" /></div>
      </div>

      <div className="flex flex-1 items-center pl-[15px]">
        <span className="font-bold text-[#3955a3]">Page 1</span>
        <div className="ml-[16px] h-[18px] w-px bg-[#dcdcdc]" />
        <span className="ml-[14px] text-[#444]">Toutes</span>
        <svg width="9" height="5" viewBox="0 0 9 5" className="ml-[7px]">
          <path d="M0 5h9L4.500 0z" fill="#3955a3" />
        </svg>
        <div className="ml-[16px] h-[18px] w-px bg-[#dcdcdc]" />
        <div className="ml-[9px] flex h-[15px] w-[15px] items-center justify-center rounded-full border border-[#3955a3]">
          <Plus size={11} strokeWidth={2.5} color="#3955a3" />
        </div>
      </div>
    </div>
  )
}

function StatusBar() {
  return (
    <div className="h-[14px] shrink-0 overflow-hidden border-t border-[#c6c6c6] bg-[#f3f3f3] text-[11.5px] tracking-[-0.3px] text-[#444]">
      <div className="flex h-[21px] items-center">
        <span className="ml-[8px]">Page 1 sur 1</span>
        <span className="ml-[19px]">Français (France)</span>
        <svg width="13" height="13" viewBox="0 0 13 13" className="ml-[20px]">
          <circle cx="3.5" cy="3" r="2.500" fill="#666" />
          <path d="M7 1h6v3H7zM1 8h12M3 7v5M7 7v5M11 7v5" fill="none" stroke="#666" />
        </svg>
        <svg width="14" height="13" viewBox="0 0 14 13" className="ml-auto">
          <path d="M0 .5h14M1.500 1v7h11V1M4 4h6M7 8v4" fill="none" stroke="#555" />
        </svg>
        <div className="ml-[18px] h-[2px] w-[6px] bg-[#555]" />
        <div className="relative ml-[4px] h-px w-[100px] bg-[#999]">
          <div className="absolute -top-[5px] left-[48px] h-[11px] w-[5px] bg-[#777]" />
        </div>
        <Plus size={9} strokeWidth={3} color="#555" className="ml-[3px]" />
        <span className="ml-[9px] w-[34px] whitespace-nowrap text-[#222]">101 %</span>
        <svg width="13" height="13" viewBox="0 0 13 13" className="ml-[11px]">
          <path d="M.5.5h12v12H.5zM6.500 2v3M6.500 8v3M2 6.500h3M8 6.500h3" fill="none" stroke="#666" />
        </svg>
        <svg width="14" height="14" viewBox="0 0 14 14" className="mr-[2px] ml-[15px]">
          <path d="M.5.500h5v5h-5zM8.500.5h5v5h-5zM.5 8.500h5v5h-5zM8.500 8.500h5v5h-5z" fill="none" stroke="#555" />
        </svg>
      </div>
    </div>
  )
}

export default function App() {
  return (
    <div className="flex h-[1079px] w-[1920px] flex-col overflow-hidden bg-black pt-2 pl-[7px] font-['Open_Sans',sans-serif]">
      <div className="flex min-h-0 flex-1 flex-col bg-[#3955a3]">
        <TitleBar />
        <TabBar />
        <Ribbon />
        <div className="flex min-h-0 flex-1">
          <Sidebar />
          <Workspace />
        </div>
        <StatusBar />
      </div>
    </div>
  )
}
